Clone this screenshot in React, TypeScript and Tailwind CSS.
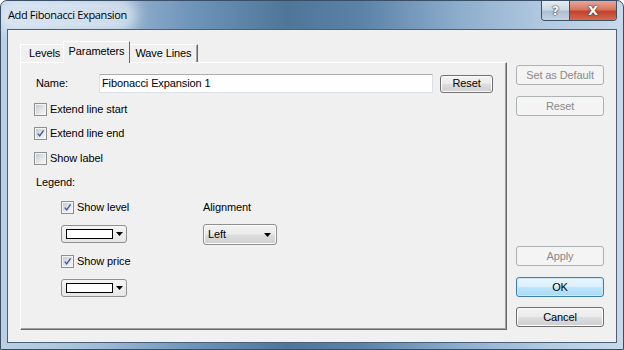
import React from "react";

const font = "font-['Liberation_Sans',Arial,sans-serif] text-[11px] leading-[13px] tracking-[-0.1px] text-black";
const btnNormal =
  "border border-[#707070] rounded-[3px] bg-[linear-gradient(to_bottom,#f2f2f2_0%,#ebebeb_48%,#dddddd_52%,#cfcfcf_100%)] shadow-[inset_0_0_0_1px_#fcfcfc]";
const btnDisabled = "border border-[#adb2b5] rounded-[3px] bg-[#f4f4f4] text-[#8a8a8a]";

function Check({ checked }: { checked?: boolean }) {
  return (
    <span className="w-[13px] h-[13px] shrink-0 border border-[#8e8f8f] bg-[#f4f4f4] p-px flex">
      <span className="flex-1 flex items-center justify-center bg-[linear-gradient(135deg,#c5c9cf_0%,#e4e5e7_55%,#f6f6f6_100%)]">
        {checked && (
          <svg width="9" height="9" viewBox="0 0 9 9">
            <path d="M1.8 4.6 L3.7 6.9 L7.6 1.4" fill="none" stroke="#3d5aa0" strokeWidth="1.4" />
          </svg>
        )}
      </span>
    </span>
  );
}

function CheckRow({ label, checked, className = "" }: { label: string; checked?: boolean; className?: string }) {
  return (
    <div className={`flex items-center gap-[3px] h-[13px] ${className}`}>
      <Check checked={checked} />
      <span>{label}</span>
    </div>
  );
}

function Arrow() {
  return (
    <svg width="7" height="4" viewBox="0 0 7 4">
      <path d="M0 0H7L3.5 4Z" fill="#000" />
    </svg>
  );
}

function ColorCombo({ className = "" }: { className?: string }) {
  return (
    <div
      className={`w-[66px] h-[18px] rounded-[3px] border border-[#8f8f8f] bg-[linear-gradient(to_bottom,#f5f5f5,#e6e6e6)] flex items-center pl-[4px] gap-[3px] ${className}`}
    >
      <div className="w-[47px] h-[10px] border border-black bg-white" />
      <Arrow />
    </div>
  );
}

function SideButton({ label, kind, className = "" }: { label: string; kind: "disabled" | "normal" | "ok"; className?: string }) {
  const style =
    kind === "disabled"
      ? btnDisabled
      : kind === "ok"
        ? "border border-[#3c7fb1] rounded-[3px] bg-[linear-gradient(to_bottom,#eaf6fd_0%,#d9f0fc_48%,#bee6fd_52%,#a7d9f5_100%)] shadow-[inset_0_0_0_1px_#cbe9fa]"
        : btnNormal;
  return <div className={`h-[20px] flex items-center justify-center ${style} ${className}`}>{label}</div>;
}

export default function App() {
  return (
    <div className="w-[624px] h-[350px] flex flex-col rounded-t-[7px] border border-[#3a4f66] bg-[linear-gradient(to_right,#bcd0e4_0%,#a6bfd8_14%,#7196bb_30%,#4f7599_46%,#5c82a8_58%,#8eaecd_74%,#b3cae1_88%,#c8d9ea_100%)] overflow-hidden">
      {/* title bar */}
      <div className="h-[28px] flex items-start">
        <div className="h-[28px] flex items-center pl-[7px]">
          <span className="font-['Open_Sans',sans-serif] text-[11px] tracking-[-0.35px] text-black rounded-full bg-[#e4edf5]/70 shadow-[0_0_14px_10px_rgba(232,240,248,0.75)]">
            Add Fibonacci Expansion
          </span>
        </div>
        <div className="ml-auto mr-[6px] flex h-[20px] border border-t-0 border-[#3d4f63] rounded-b-[4px] overflow-hidden">
          <div className="w-[28px] flex items-center justify-center bg-[linear-gradient(to_bottom,#e5ecf3_0%,#cdd9e6_45%,#aebfd1_55%,#c4d3e2_100%)] border-r border-[#3d4f63] font-['DejaVu_Sans',sans-serif] font-bold text-[12px] text-white [text-shadow:0_0_1px_#222,0_0_2px_#333]">
            ?
          </div>
          <div className="w-[46px] flex items-center justify-center bg-[linear-gradient(to_bottom,#e8a797_0%,#d8775f_45%,#c4422b_55%,#d36a4e_100%)] font-['DejaVu_Sans',sans-serif] font-bold text-[13px] text-white [text-shadow:0_0_1px_#222,0_0_2px_#333]">
            X
          </div>
        </div>
      </div>

      {/* client area */}
      <div className={`mx-[6px] h-[314px] border border-[#4a6078] bg-[#f0f0f0] flex ${font}`}>
        {/* tab control */}
        <div className="pl-[12px] pt-[11px] flex flex-col">
          <div className="h-[21px] flex items-end">
            <div className="h-[18px] pl-[8px] flex items-center border border-b-0 border-t-white border-l-white border-r-0 bg-[#f0f0f0] w-[43px]">
              Levels
            </div>
            <div className="relative z-10 -mb-px h-[22px] w-[67px] flex items-center justify-center border border-b-0 border-t-white border-l-white border-r-[#696969] bg-[#f0f0f0] pb-[2px]">
              Parameters
            </div>
            <div className="h-[18px] w-[68px] flex items-center justify-center border border-b-0 border-t-white border-l-0 border-r-[#696969] shadow-[inset_-1px_0_0_#a0a0a0] bg-[#f0f0f0]">
              Wave Lines
            </div>
          </div>
          <div className="w-[487px] h-[268px] border border-t-white border-l-white border-r-[#696969] border-b-[#696969] shadow-[inset_-1px_-1px_0_#a0a0a0] flex flex-col pt-[11px] pl-[13px]">
            {/* name row */}
            <div className="flex items-center h-[19px]">
              <span className="w-[65px] pl-[2px]">Name:</span>
              <div className="w-[334px] h-[19px] border border-[#dbdfe6] border-t-[#abadb3] bg-white flex items-center pl-[2px]">
                Fibonacci Expansion 1
              </div>
              <div className={`ml-[7px] w-[53px] h-[18px] flex items-center justify-center ${btnNormal}`}>Reset</div>
            </div>

            <CheckRow label="Extend line start" className="mt-[10px]" />
            <CheckRow label="Extend line end" checked className="mt-[11px]" />
            <CheckRow label="Show label" className="mt-[12px]" />
            <div className="mt-[11px] h-[13px] pl-[2px]">Legend:</div>

            <div className="mt-[12px] flex">
              <div className="ml-[27px] w-[142px] flex flex-col">
                <CheckRow label="Show level" checked />
                <ColorCombo className="mt-[11px]" />
                <CheckRow label="Show price" checked className="mt-[12px]" />
                <ColorCombo className="mt-[11px]" />
              </div>
              <div className="flex flex-col">
                <div className="h-[13px]">Alignment</div>
                <div className="mt-[10px] w-[74px] h-[21px] flex items-center pl-[4px] pr-[5px] border border-[#8f8f8f] rounded-[3px] bg-[linear-gradient(to_bottom,#f2f2f2_0%,#ebebeb_48%,#dddddd_52%,#cfcfcf_100%)] shadow-[inset_0_0_0_1px_#fcfcfc]">
                  <span>Left</span>
                  <span className="ml-auto flex">
                    <Arrow />
                  </span>
                </div>
              </div>
            </div>
          </div>
        </div>

        {/* right buttons */}
        <div className="ml-[9px] w-[88px] pt-[35px] pb-[15px] flex flex-col">
          <SideButton label="Set as Default" kind="disabled" />
          <SideButton label="Reset" kind="disabled" className="mt-[11px]" />
          <SideButton label="Apply" kind="disabled" className="mt-auto" />
          <SideButton label="OK" kind="ok" className="mt-[11px]" />
          <SideButton label="Cancel" kind="normal" className="mt-[10px]" />
        </div>
      </div>
    </div>
  );
}
